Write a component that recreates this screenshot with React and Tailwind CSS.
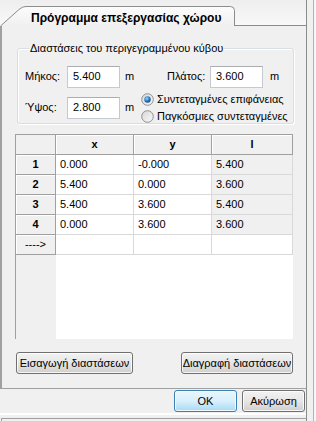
import React from "react";

const rows = [
  ["1", "0.000", "-0.000", "5.400"],
  ["2", "5.400", "0.000", "3.600"],
  ["3", "5.400", "3.600", "5.400"],
  ["4", "0.000", "3.600", "3.600"],
];

function Radio({ checked, label }) {
  return (
    <label className="flex items-center h-[17px] gap-[3px]">
      <svg width="13" height="13" viewBox="0 0 13 13">
        <defs>
          <linearGradient id={checked ? "rg1" : "rg2"} x1="0" y1="0" x2="1" y2="1">
            <stop offset="0" stopColor="#d6d6d6" />
            <stop offset="1" stopColor="#fbfbfb" />
          </linearGradient>
          <radialGradient id="dot" cx="0.4" cy="0.35" r="0.7">
            <stop offset="0" stopColor="#9fd3fa" />
            <stop offset="0.5" stopColor="#2f86cf" />
            <stop offset="1" stopColor="#0b3f78" />
          </radialGradient>
        </defs>
        <circle cx="6.5" cy="6.5" r="5.8" fill={`url(#${checked ? "rg1" : "rg2"})`} stroke="#8e8f8f" strokeWidth="1" />
        {checked && <circle cx="6.5" cy="6.5" r="3.2" fill="url(#dot)" />}
      </svg>
      <span>{label}</span>
    </label>
  );
}

function Field({ value }) {
  return (
    <div className="w-[53px] h-[22px] bg-white border border-[#c5c9d0] border-t-[#abadb3] flex items-center pl-[5px]">
      {value}
    </div>
  );
}

function WinButton({ children, className = "", primary }) {
  return (
    <button
      className={
        "h-[22px] rounded-[3px] border text-[11px] shadow-[inset_0_0_0_1px_rgba(255,255,255,0.8)] " +
        (primary
          ? "border-[#3c7fb1] bg-gradient-to-b from-[#eaf6fd] via-[#d9f0fc] to-[#a7d9f5] "
          : "border-[#707070] bg-gradient-to-b from-[#f2f2f2] via-[#e6e6e6] to-[#cfcfcf] ") +
        className
      }
    >
      {children}
    </button>
  );
}

export default function App() {
  return (
    <div className="w-[316px] h-[421px] bg-[#f0f0f0] flex overflow-hidden text-[11px] text-black font-['Liberation_Sans',Arial,sans-serif]">
      <div className="w-[307px] border-r border-[#8c8c8c] flex flex-col">
        {/* tab strip */}
        <div className="h-[26px] flex items-end bg-gradient-to-b from-[#eeeeee] to-[#f9f9f9]">
          <div className="relative w-[235px] h-[20px] shrink-0">
            <svg className="absolute inset-0" width="235" height="20" viewBox="0 0 235 20">
              <defs>
                <linearGradient id="tabfill" x1="0" y1="0" x2="0" y2="1">
                  <stop offset="0" stopColor="#fcfcfc" />
                  <stop offset="1" stopColor="#f0f0f0" />
                </linearGradient>
              </defs>
              <path
                d="M0.5 20 L19 3.5 Q22 0.5 26 0.5 L230.5 0.5 Q234.5 0.5 234.5 4.5 L234.5 20"
                fill="url(#tabfill)"
                stroke="#8c8c8c"
                strokeWidth="1"
              />
            </svg>
            <div className="relative pl-[31px] pt-[3px] text-[12px] font-bold">
              Πρόγραμμα επεξεργασίας χώρου
            </div>
          </div>
          <div className="flex-1 border-b border-[#8c8c8c]" />
        </div>

        {/* panel */}
        <div className="h-[363px] border-l-2 border-b border-[#a0a0a0] flex flex-col">
          <fieldset className="ml-[15px] mt-[14px] w-[277px] h-[84px] border border-[#d5dfe5] rounded-[3px] shadow-[inset_1px_1px_0_#fff,1px_1px_0_#fff] pl-[7px]">
            <legend className="ml-[4px] px-[1px]">Διαστάσεις του περιγεγραμμένου κύβου</legend>
            <div className="flex items-center mt-[9px]">
              <span className="w-[42px]">Μήκος:</span>
              <Field value="5.400" />
              <span className="w-[47px] pl-[5px]">m</span>
              <span className="w-[43px]">Πλάτος:</span>
              <Field value="3.600" />
              <span className="pl-[7px]">m</span>
            </div>
            <div className="flex items-center mt-[3px] h-[34px]">
              <span className="w-[42px]">Ύψος:</span>
              <Field value="2.800" />
              <span className="w-[16px] pl-[5px]">m</span>
              <div className="ml-[5px] flex flex-col">
                <Radio checked label="Συντεταγμένες επιφάνειας" />
                <Radio label="Παγκόσμιες συντεταγμένες" />
              </div>
            </div>
          </fieldset>

          {/* grid */}
          <div className="ml-[13px] mt-[10px] w-[278px] h-[205px] border-l border-t border-[#a0a0a0] bg-white flex flex-col">
            <div className="grid grid-cols-[40px_78px_78px_81px]">
              <div className="h-[20px] bg-[#f0f0f0] border-r border-b border-[#a0a0a0]" />
              {["x", "y", "l"].map((h) => (
                <div
                  key={h}
                  className="h-[20px] bg-[#f0f0f0] border-r border-b border-[#a0a0a0] shadow-[inset_1px_1px_0_#fff] flex items-center justify-center font-bold"
                >
                  {h}
                </div>
              ))}
              {rows.map((r) => (
                <React.Fragment key={r[0]}>
                  <div className="h-[20px] bg-[#f0f0f0] border-r border-b border-[#a0a0a0] shadow-[inset_1px_1px_0_#fff] flex items-center justify-center font-bold">
                    {r[0]}
                  </div>
                  <div className="h-[20px] border-r border-b border-[#d9d9d9] flex items-center pl-[4px] pb-[1px]">{r[1]}</div>
                  <div className="h-[20px] border-r border-b border-[#d9d9d9] flex items-center pl-[4px] pb-[1px]">{r[2]}</div>
                  <div className="h-[20px] bg-[#f0f0f0] border-r border-b border-[#d9d9d9] flex items-center pl-[4px] pb-[1px]">{r[3]}</div>
                </React.Fragment>
              ))}
              <div className="h-[20px] bg-[#f0f0f0] border-r border-b border-[#a0a0a0] shadow-[inset_1px_1px_0_#fff] flex items-center justify-center">
                ----&gt;
              </div>
              <div className="h-[20px] border-r border-b border-[#d9d9d9]" />
              <div className="h-[20px] border-r border-b border-[#d9d9d9]" />
              <div className="h-[20px] border-r border-b border-[#d9d9d9]" />
            </div>
            <div className="flex-1 flex">
              <div className="w-[40px] bg-[#f0f0f0]" />
              <div className="flex-1" />
            </div>
          </div>

          <div className="flex justify-between ml-[14px] mr-[13px] mt-[13px]">
            <WinButton className="w-[117px]">Εισαγωγή διαστάσεων</WinButton>
            <WinButton className="w-[112px]">Διαγραφή διαστάσεων</WinButton>
          </div>
        </div>

        {/* dialog buttons */}
        <div className="flex justify-end gap-[5px] mr-[1px] mt-[1px]">
          <WinButton primary className="w-[63px]">OK</WinButton>
          <WinButton className="w-[63px]">Ακύρωση</WinButton>
        </div>
        <div className="mt-[1px] h-[2px] bg-white" />
        <div className="mt-[3px] ml-[1px] flex-1 border-t border-l border-[#a0a0a0]" />
      </div>
      <div className="flex-1 flex">
        <div className="w-[6px]" />
        <div className="flex-1 border-l border-[#a6b7c9] bg-[#f4f6f9]" />
      </div>
    </div>
  );
}
